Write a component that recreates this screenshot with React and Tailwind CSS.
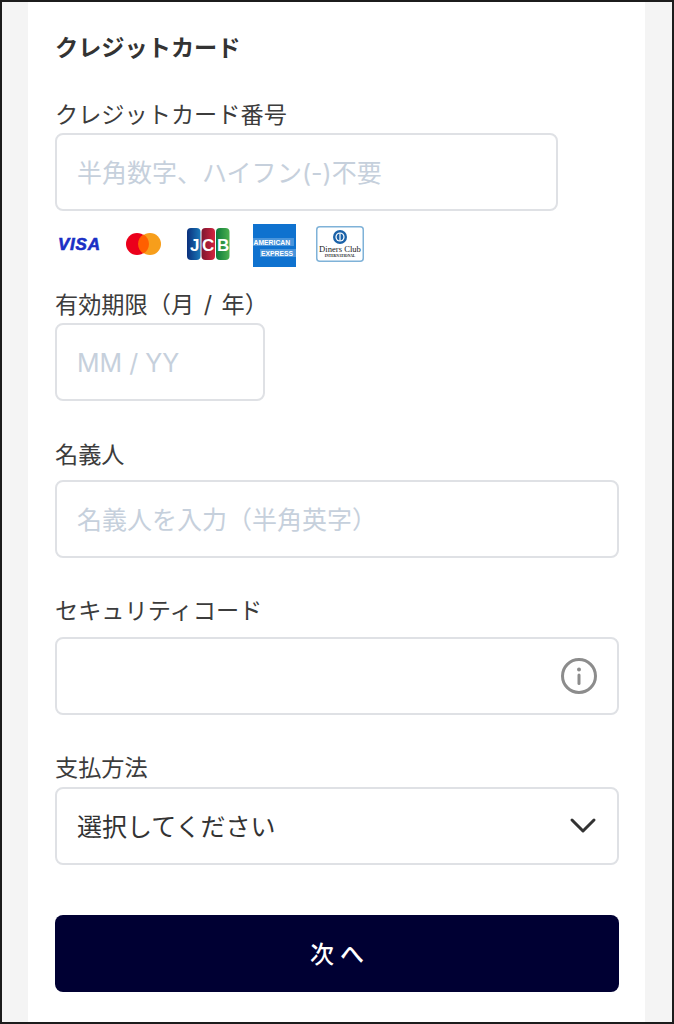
const FONT = { fontFamily: 'Inter, "Noto Sans CJK JP", "Liberation Sans", sans-serif' }

const Label = ({ className = '', children }) => (
  <div className={`h-[28px] pt-[2px] flex items-center text-[23.2px] leading-[28px] text-[#3c3c3c] ${className}`}>{children}</div>
)

const inputBox = 'h-[78px] border-2 border-[#dfe1e5] rounded-[8px] bg-white flex items-center px-[20px] text-[25px]'

const VisaLogo = () => (
  <svg width="44" height="20" viewBox="0 0 44 20">
    <text x="0" y="15" fontFamily="Liberation Sans" fontWeight="700" fontStyle="italic" fontSize="17" fill="#1a2fc5" stroke="#1a2fc5" strokeWidth="0.6" textLength="42">VISA</text>
  </svg>
)

const MasterLogo = () => (
  <svg width="38" height="24" viewBox="0 0 38 24">
    <circle cx="12" cy="12" r="11" fill="#eb001b" />
    <circle cx="25" cy="12" r="11" fill="#f79e1b" />
    <path d="M18.5 2.5a11 11 0 0 1 0 19a11 11 0 0 1 0-19z" fill="#ff5f00" />
  </svg>
)

const JcbLogo = () => (
  <svg width="44" height="34" viewBox="0 0 44 34">
    <defs>
      <linearGradient id="jb" x1="0" y1="0" x2="1" y2="0"><stop offset="0" stopColor="#0a2f7c" /><stop offset="1" stopColor="#1a78b8" /></linearGradient>
      <linearGradient id="jr" x1="0" y1="0" x2="1" y2="0"><stop offset="0" stopColor="#7c1530" /><stop offset="1" stopColor="#d4243f" /></linearGradient>
      <linearGradient id="jg" x1="0" y1="0" x2="1" y2="0"><stop offset="0" stopColor="#0c7a3a" /><stop offset="1" stopColor="#4cb050" /></linearGradient>
    </defs>
    <rect x="1" y="1" width="13.5" height="32" rx="4" fill="url(#jb)" />
    <rect x="15.5" y="1" width="13.5" height="32" rx="4" fill="url(#jr)" />
    <rect x="30" y="1" width="13.5" height="32" rx="4" fill="url(#jg)" />
    <text x="4" y="23.5" fontFamily="Liberation Sans" fontWeight="700" fontSize="17" fill="#fff">J</text>
    <text x="16" y="23.5" fontFamily="Liberation Sans" fontWeight="700" fontSize="17" fill="#fff">C</text>
    <text x="31" y="23.5" fontFamily="Liberation Sans" fontWeight="700" fontSize="17" fill="#fff">B</text>
  </svg>
)

const AmexLogo = () => (
  <svg width="43" height="43" viewBox="0 0 43 43">
    <rect width="43" height="43" fill="#0f72cf" />
    <rect y="14" width="41" height="8" fill="#d5e8f8" opacity="0.3" />
    <rect x="7" y="25" width="36" height="8" fill="#d5e8f8" opacity="0.3" />
    <text x="0.5" y="20.8" fontFamily="Liberation Sans" fontWeight="700" fontSize="6.8" fill="#fff">AMERICAN</text>
    <text x="8" y="31.8" fontFamily="Liberation Sans" fontWeight="700" fontSize="6.8" fill="#fff">EXPRESS</text>
  </svg>
)

const DinersLogo = () => (
  <svg width="48" height="36" viewBox="0 0 48 36">
    <rect x="0.75" y="0.75" width="46.5" height="34.5" rx="3" fill="#fff" stroke="#7fb2d8" strokeWidth="1.5" />
    <circle cx="24" cy="11" r="7" fill="#1b62a8" />
    <circle cx="24" cy="11" r="4.6" fill="#fff" />
    <path d="M23.4 7.5v7a3.6 3.6 0 0 1 0-7zM24.6 7.5a3.6 3.6 0 0 1 0 7z" fill="#1b62a8" />
    <text x="24" y="26" textAnchor="middle" fontFamily="Liberation Serif" fontSize="8.6" fill="#222">Diners Club</text>
    <text x="24" y="31" textAnchor="middle" fontFamily="Liberation Serif" fontWeight="700" fontSize="3.6" fill="#222">INTERNATIONAL</text>
  </svg>
)

export default function App() {
  return (
    <div className="h-[1024px] border-2 border-[#1c1c1c] bg-[#f4f4f4] overflow-hidden" style={FONT}>
      <div className="ml-[26px] mr-[27px] h-full bg-white pl-[27px] pr-[26px] pt-[32px]">
        <div className="h-[28px] pt-[1px] flex items-center text-[23.2px] font-bold text-[#333]">クレジットカード</div>

        <Label className="mt-[38px]">クレジットカード番号</Label>
        <div className={`${inputBox} pt-[3px] mt-[5px] w-[503px] text-[#c6d0dc]`}>半角数字、ハイフン(-)不要</div>

        <div className="mt-[13px] h-[43px] flex items-start">
          <div className="ml-[3px] mt-[11px] w-[44px] flex"><VisaLogo /></div>
          <div className="ml-[23px] mt-[8px] w-[38px] flex"><MasterLogo /></div>
          <div className="ml-[23px] mt-[3px] w-[44px] flex"><JcbLogo /></div>
          <div className="ml-[23px] w-[43px] flex"><AmexLogo /></div>
          <div className="ml-[20px] mt-[2px] w-[48px] flex"><DinersLogo /></div>
        </div>

        <Label className="mt-[23px] [word-spacing:3px]">有効期限（月 / 年）</Label>
        <div className={`${inputBox} pt-[3px] mt-[5px] w-[210px] text-[#c6d0dc]`}>MM / YY</div>

        <Label className="mt-[39px]">名義人</Label>
        <div className={`${inputBox} pt-[3px] mt-[12px] text-[#c6d0dc]`}>名義人を入力（半角英字）</div>

        <Label className="mt-[38px]">セキュリティコード</Label>
        <div className={`${inputBox} mt-[13px] justify-end !px-[19px]`}>
          <svg width="38" height="38" viewBox="0 0 38 38" fill="none">
            <circle cx="19" cy="19" r="16.5" stroke="#8c8c8c" strokeWidth="3" />
            <circle cx="19" cy="12.5" r="2" fill="#8c8c8c" />
            <path d="M19 18v8.5" stroke="#8c8c8c" strokeWidth="3" strokeLinecap="round" />
          </svg>
        </div>

        <Label className="mt-[38px]">支払方法</Label>
        <div className={`${inputBox} mt-[6px] justify-between text-[#333] !pr-[20px]`}>
          <span className="pt-[3px]">選択してください</span>
          <svg width="28" height="18" viewBox="0 0 28 18" fill="none">
            <path d="M3 3l11 11L25 3" stroke="#333" strokeWidth="3" strokeLinecap="round" strokeLinejoin="round" />
          </svg>
        </div>

        <button className="mt-[50px] w-full h-[77px] pt-[2px] rounded-[8px] bg-[#000033] text-white text-[24px] font-medium flex items-center justify-center gap-[6px]">
          <span>次</span>
          <span>へ</span>
        </button>
      </div>
    </div>
  )
}
